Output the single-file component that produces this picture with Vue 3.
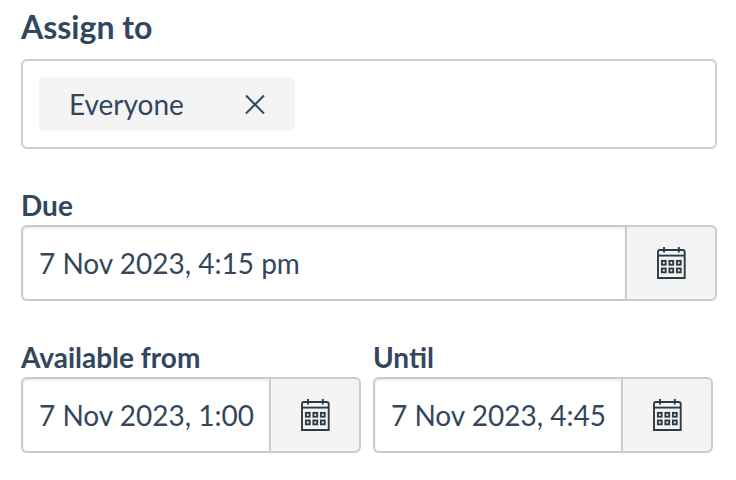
<script setup>
import { ref } from 'vue'

const assignees = ref(['Everyone'])

const due = ref({ id: 'due', label: 'Due', value: '7 Nov 2023, 4:15 pm' })
const availability = ref([
  { id: 'available-from', label: 'Available from', value: '7 Nov 2023, 1:00' },
  { id: 'until', label: 'Until', value: '7 Nov 2023, 4:45' }
])

const cells = [
  [5.9, 13.9], [13.4, 13.9], [20.9, 13.9],
  [5.9, 21.5], [13.4, 21.5], [20.9, 21.5]
]

const removeAssignee = (name) => {
  assignees.value = assignees.value.filter((a) => a !== name)
}
</script>

<template>
  <form class="assign-form" @submit.prevent>
    <h2 id="assign-label" class="title">Assign to</h2>
    <div class="token-box" role="group" aria-labelledby="assign-label">
      <div v-for="name in assignees" :key="name" class="token">
        <span>{{ name }}</span>
        <button type="button" class="remove" :aria-label="'Remove ' + name" @click="removeAssignee(name)">
          <svg width="20" height="20" viewBox="0 0 20 20">
            <path d="M1 1.5L19 19.5M19 1.5L1 19.5" fill="none" stroke="currentColor" stroke-width="2" />
          </svg>
        </button>
      </div>
    </div>

    <div v-for="(row, i) in [[due], availability]" :key="i" :class="['row', { split: row.length > 1 }]">
      <div v-for="field in row" :key="field.id" class="field">
        <label :for="field.id">{{ field.label }}</label>
        <div class="date-input">
          <input :id="field.id" v-model="field.value" type="text" />
          <button type="button" class="picker" :aria-label="'Pick a date: ' + field.label">
            <svg width="30" height="32" viewBox="0 0 30 32" fill="none" stroke="currentColor">
              <path d="M2 31V5Q2 3 4 3H26.7Q28.7 3 28.7 5V31Z" stroke-width="1.9" />
              <path d="M2 8.6H28.7" stroke-width="1.9" />
              <path d="M8 0V5.4M22.8 0V5.4" stroke-width="1.9" />
              <rect
                v-for="([x, y], n) in cells"
                :key="n"
                :x="x"
                :y="y"
                width="3.8"
                height="3.8"
                stroke-width="1.9"
              />
            </svg>
          </button>
        </div>
      </div>
    </div>
  </form>
</template>

<style>
body {
  background-color: #fff;
}
</style>

<style scoped>
.assign-form {
  padding: 8px 19px 24px 21px;
  color: #32475e;
  font-family: Lato, sans-serif;
  font-size: 28px;
  line-height: 34px;
}

.title {
  margin: 0 0 14px;
  font-size: 32px;
  line-height: 37px;
  font-weight: 700;
}

.token-box {
  box-sizing: border-box;
  min-height: 90px;
  padding: 16px;
  border: 2px solid #c7cdd1;
  border-radius: 6px;
  display: flex;
  flex-wrap: wrap;
  gap: 8px;
}

.token {
  display: flex;
  align-items: center;
  gap: 61px;
  padding: 10px 30px;
  background-color: #f4f4f4;
  border-radius: 6px;
}

.remove {
  display: flex;
  padding: 0;
  border: none;
  background: none;
  color: inherit;
  cursor: pointer;
}

.row {
  display: flex;
  gap: 12px;
  margin-top: 39px;
}

.row.split {
  margin-right: 4px;
}

.field {
  flex: 1;
  min-width: 0;
}

label {
  display: block;
  margin-bottom: 3px;
  font-weight: 700;
}

.date-input {
  display: flex;
  height: 76px;
}

input {
  flex: 1;
  min-width: 0;
  box-sizing: border-box;
  padding: 0 14px 0 16px;
  border: 2px solid #c9caca;
  border-right: none;
  border-radius: 6px 0 0 6px;
  background-color: #fff;
  box-shadow: inset 0 2px 3px rgba(0, 0, 0, 0.08);
  color: inherit;
  font: inherit;
  outline: none;
}

input:focus {
  border-color: #008ee2;
}

.picker {
  box-sizing: border-box;
  width: 92px;
  padding: 0;
  border: 2px solid #c7cdd1;
  border-radius: 0 6px 6px 0;
  background-color: #f4f4f4;
  color: #2d3b45;
  display: flex;
  align-items: center;
  justify-content: center;
  cursor: pointer;
}
</style>
